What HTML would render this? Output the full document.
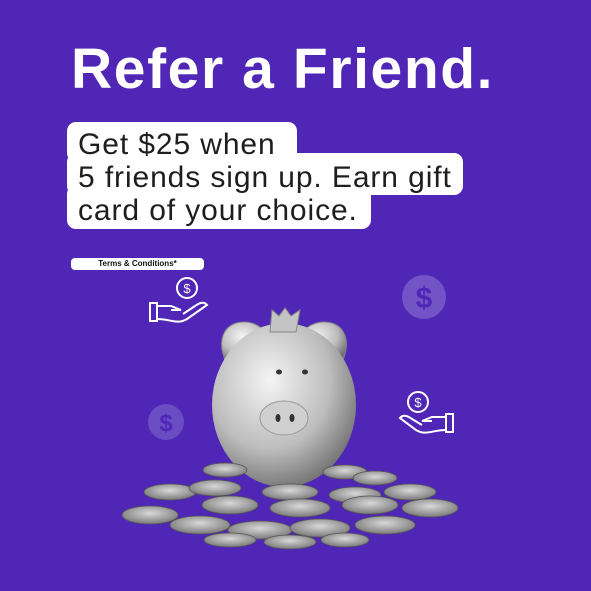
<!DOCTYPE html>
<html><head><style>
*{margin:0;padding:0}
body{width:591px;height:591px;background:#4f26b6;position:relative;overflow:hidden;font-family:"Liberation Sans",sans-serif}
.t{position:absolute;left:71px;top:36px;color:#fff;font-weight:bold;font-size:57px;letter-spacing:1.6px;white-space:nowrap}
.b{position:absolute;background:#fff;border-radius:9px}
.tx{position:absolute;left:78px;top:128px;font-size:30px;letter-spacing:0.9px;line-height:33px;color:#1e1e1e;white-space:nowrap}
.pill{position:absolute;left:71px;top:258px;width:133px;height:12px;background:#fff;border-radius:4px;font-size:8px;font-weight:bold;text-align:center;line-height:12px;color:#111}
</style></head><body>
<div class="t">Refer a Friend.</div>
<div class="b" style="left:67px;top:122px;width:230px;height:40px"></div>
<div class="b" style="left:67px;top:153px;width:396px;height:42px"></div>
<div class="b" style="left:67px;top:185px;width:304px;height:44px"></div>
<div class="tx">Get $25 when<br>5 friends sign up. Earn gift<br>card of your choice.</div>
<div class="pill">Terms &amp; Conditions*</div>
<svg width="591" height="591" style="position:absolute;left:0;top:0">
<defs>
<radialGradient id="g" cx="0.4" cy="0.35" r="0.7"><stop offset="0" stop-color="#f4f4f4"/><stop offset="0.6" stop-color="#bdbdbd"/><stop offset="1" stop-color="#6e6e6e"/></radialGradient>
<radialGradient id="c" cx="0.5" cy="0.4" r="0.6"><stop offset="0" stop-color="#d8d8d8"/><stop offset="1" stop-color="#7a7a7a"/></radialGradient>
</defs>
<circle cx="424" cy="297" r="22" fill="#7254c6"/><text x="424" y="308" font-size="30" font-weight="bold" fill="#4f26b6" text-anchor="middle" font-family="Liberation Sans">$</text>
<circle cx="166" cy="422" r="18" fill="#6a4cc3"/><text x="166" y="431" font-size="24" font-weight="bold" fill="#4f26b6" text-anchor="middle" font-family="Liberation Sans">$</text>
<g fill="none" stroke="#fff" stroke-width="2">
<circle cx="187" cy="288" r="10"/><text x="187" y="293" font-size="13" fill="#fff" stroke="none" text-anchor="middle">$</text>
<rect x="150" y="303" width="7" height="18"/><path d="M157 306h14l10 4h-10 M157 319c14 0 20 6 30 0l20-14c-3-4-8-2-12 1l-12 8"/>
<circle cx="418" cy="402" r="10"/><text x="418" y="407" font-size="13" fill="#fff" stroke="none" text-anchor="middle">$</text>
<rect x="446" y="414" width="7" height="18"/><path d="M446 417h-14l-10 4h10 M446 430c-14 0-20 6-30 0l-16-12c3-4 8-2 12 1l10 6"/>
</g>
<path d="M226 362c-10-22-2-40 18-40 14 0 24 10 28 20z" fill="url(#g)" stroke="#888"/>
<path d="M342 362c10-22 2-40-18-40-14 0-24 10-28 20z" fill="url(#g)" stroke="#888"/>
<ellipse cx="284" cy="405" rx="72" ry="82" fill="url(#g)"/>
<path d="M272 310l7 6 6-8 6 8 9-6-4 22h-26z" fill="#c4c4c4" stroke="#888"/>
<ellipse cx="284" cy="418" rx="24" ry="17" fill="#d0d0d0" stroke="#999"/>
<ellipse cx="278" cy="418" rx="2.5" ry="4" fill="#333"/><ellipse cx="292" cy="418" rx="2.5" ry="4" fill="#333"/>
<ellipse cx="279" cy="372" rx="3" ry="2.5" fill="#333"/><ellipse cx="305" cy="372" rx="3" ry="2.5" fill="#333"/>
<g fill="url(#c)" stroke="#555" stroke-width="0.8">
<ellipse cx="225" cy="470" rx="22" ry="7"/><ellipse cx="345" cy="472" rx="22" ry="7"/><ellipse cx="375" cy="478" rx="22" ry="7"/>
<ellipse cx="170" cy="492" rx="26" ry="8"/><ellipse cx="215" cy="488" rx="26" ry="8"/><ellipse cx="290" cy="492" rx="28" ry="8"/><ellipse cx="355" cy="495" rx="26" ry="8"/><ellipse cx="410" cy="492" rx="26" ry="8"/>
<ellipse cx="150" cy="515" rx="28" ry="9"/><ellipse cx="230" cy="505" rx="28" ry="9"/><ellipse cx="300" cy="508" rx="30" ry="9"/><ellipse cx="370" cy="505" rx="28" ry="9"/><ellipse cx="430" cy="508" rx="28" ry="9"/>
<ellipse cx="200" cy="525" rx="30" ry="9"/><ellipse cx="260" cy="530" rx="32" ry="9"/><ellipse cx="320" cy="528" rx="30" ry="9"/><ellipse cx="385" cy="525" rx="30" ry="9"/>
<ellipse cx="230" cy="540" rx="26" ry="7"/><ellipse cx="290" cy="542" rx="26" ry="7"/><ellipse cx="345" cy="540" rx="24" ry="7"/>
</g>
</svg>
</body></html>
